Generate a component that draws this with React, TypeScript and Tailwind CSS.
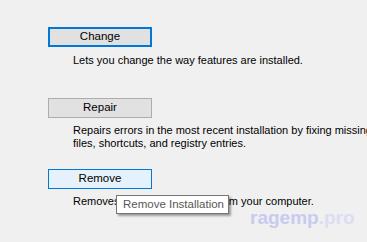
const font = { fontFamily: '"Liberation Sans", Arial, sans-serif' };

function SetupButton({
  label,
  variant,
}: {
  label: string;
  variant: "focused" | "normal" | "hover";
}) {
  const tone =
    variant === "focused"
      ? "border-2 border-[#0078d7] bg-[#e1e1e1]"
      : variant === "hover"
        ? "border border-[#0078d7] bg-[#e5f1fb]"
        : "border border-[#adadad] bg-[#e1e1e1]";
  return (
    <button
      className={`flex h-[20px] w-[104px] items-center justify-center text-[11.5px] leading-none text-black ${tone}`}
    >
      {label}
    </button>
  );
}

export default function App() {
  return (
    <div
      className="relative h-[242px] w-[367px] overflow-hidden bg-[#f0f0f0] pl-[48px] pt-[27px] text-[11px] leading-[13px] text-black"
      style={font}
    >
      <SetupButton label="Change" variant="focused" />
      <p className="mt-[7px] whitespace-nowrap pl-[25px]">
        Lets you change the way features are installed.
      </p>

      <div className="mt-[31px]">
        <SetupButton label="Repair" variant="normal" />
      </div>
      <p className="mt-[6px] whitespace-nowrap pl-[25px]">
        Repairs errors in the most recent installation by fixing missing
        <br />
        files, shortcuts, and registry entries.
      </p>

      <div className="mt-[19px]">
        <SetupButton label="Remove" variant="hover" />
      </div>
      <p className="mt-[6px] whitespace-nowrap pl-[25px]">
        Removes RAGE Multiplayer <span className="ml-[3px]">from</span> your
        computer.
      </p>

      {/* tooltip over the remove description */}
      <div className="absolute left-[116px] top-[195px] flex h-[19px] w-[113px] items-center border border-[#767676] bg-white pl-[6px] text-[11.5px] text-[#575757] shadow-[2px_2px_2px_rgba(0,0,0,0.35)]">
        Remove Installation
      </div>

      {/* watermark */}
      <div className="absolute left-[250px] top-[208px] text-[19px] font-bold leading-none">
        <span className="text-[#c8cbf0]">ragemp</span>
        <span className="text-[#dcdcf3]">.pro</span>
      </div>
    </div>
  );
}
